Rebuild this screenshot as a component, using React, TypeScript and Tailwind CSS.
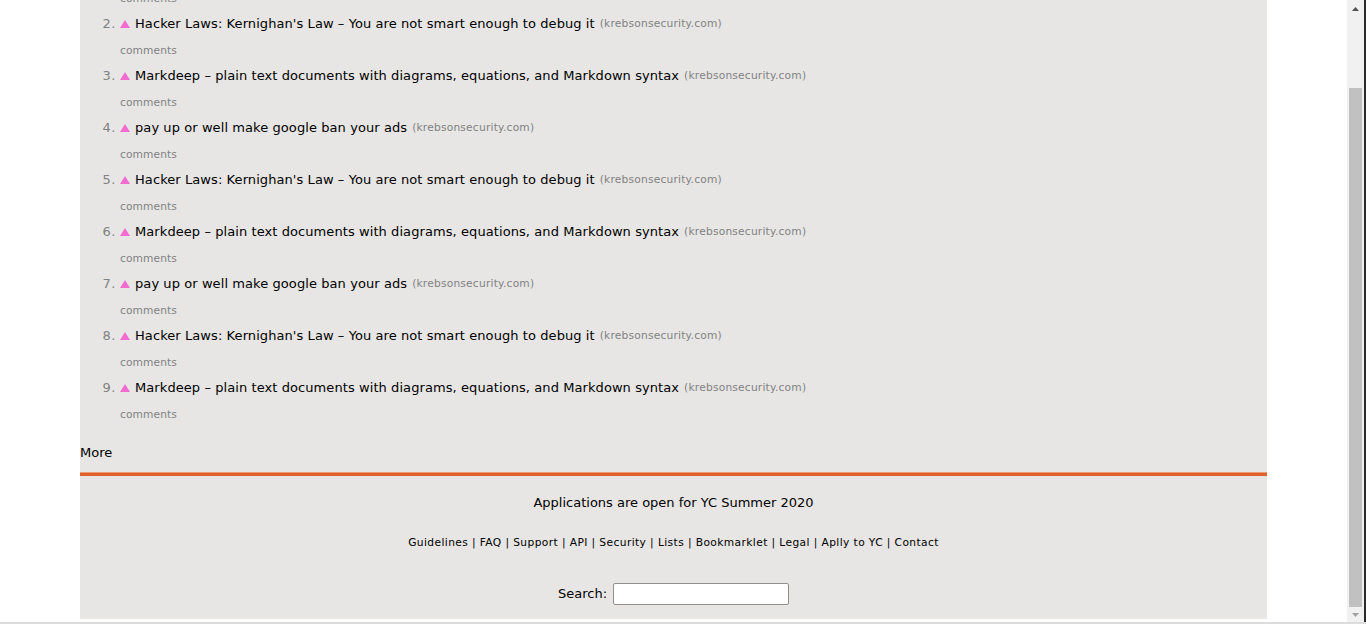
import React from 'react';

const titles = [
  'pay up or well make google ban your ads',
  "Hacker Laws: Kernighan's Law – You are not smart enough to debug it",
  'Markdeep – plain text documents with diagrams, equations, and Markdown syntax',
];

const stories = Array.from({ length: 9 }, (_, i) => ({
  rank: i + 1,
  title: titles[i % 3],
  site: 'krebsonsecurity.com',
}));

const footerLinks = ['Guidelines', 'FAQ', 'Support', 'API', 'Security', 'Lists', 'Bookmarklet', 'Legal', 'Aplly to YC', 'Contact'];

function UpArrow() {
  return (
    <svg width="10" height="8" viewBox="0 0 10 8" className="shrink-0">
      <polygon points="5,0 10,8 0,8" fill="#f26bd1" />
    </svg>
  );
}

function Story({ rank, title, site }: { rank: number; title: string; site: string }) {
  return (
    <div>
      <div className="h-[24px] flex items-center">
        <span className="w-[36px] text-right text-[13px] text-[#828282] tracking-[0.5px]">{rank}.</span>
        <span className="ml-[4px] mr-[5px] flex items-center">
          <UpArrow />
        </span>
        <a href="#" className="text-[13px] text-black tracking-[0.08px]">{title}</a>
        <span className="ml-[5px] text-[10.67px] text-[#828282] tracking-[0.2px]">({site})</span>
      </div>
      <div className="h-[28px] flex items-center pl-[40px] pt-[1px]">
        <a href="#" className="text-[10.67px] text-[#828282] tracking-[0.1px]">comments</a>
      </div>
    </div>
  );
}

// drawing of the browser's scrollbar, scrolled to the bottom
function Scrollbar() {
  return (
    <div className="w-[19px] h-full flex shrink-0">
      <div className="w-[17px] h-full bg-[#f1f1f1] flex flex-col items-center">
        <div className="h-[15px] w-full flex items-center justify-center pt-[2px]">
          <svg width="7" height="4" viewBox="0 0 7 4">
            <polygon points="3.5,0 7,4 0,4" fill="#505050" />
          </svg>
        </div>
        <div className="h-[73px] shrink-0" />
        <div className="flex-1 w-[13px] bg-[#c1c1c1]" />
        <div className="h-[15px] w-full flex items-center justify-center">
          <svg width="7" height="4" viewBox="0 0 7 4">
            <polygon points="0,0 7,0 3.5,4" fill="#a3a3a3" />
          </svg>
        </div>
      </div>
      <div className="w-[2px] h-full bg-[#2b2b2b]" />
    </div>
  );
}

export default function App() {
  return (
    <div className="h-screen flex flex-col overflow-hidden bg-white font-['Verdana','DejaVu_Sans',sans-serif]">
      <div className="flex-1 min-h-0 flex">
        <div className="flex-1 min-w-0 flex flex-col justify-end overflow-hidden">
          <div className="shrink-0 pt-2 pb-[3px]">
            <div className="w-[1187px] mx-auto bg-[#e7e6e4]">
              <header className="h-[24px] bg-[#e1622c] flex items-center px-[4px] text-[13px] text-black">
                <span className="w-[18px] h-[18px] border border-white flex items-center justify-center text-white font-bold text-[12px]">Y</span>
                <b className="ml-[6px]">Hacker News</b>
                <span className="ml-[8px]">new | past | comments | ask | show | jobs | submit</span>
                <span className="ml-auto pr-[4px]">login</span>
              </header>

              <main className="pt-[16px]">
                {stories.map((s) => (
                  <Story key={s.rank} {...s} />
                ))}
              </main>

              <div className="mt-[15px] h-[20px] flex items-center text-[13px] text-black">
                <a href="#">More</a>
              </div>

              <div className="mt-[9px] h-[4px] bg-[#e1612b] border-t border-[#eb9a74]" />

              <footer className="text-center text-black">
                <div className="mt-[19px] h-[16px] leading-[16px] text-[13px]">Applications are open for YC Summer 2020</div>
                <div className="mt-[25px] h-[14px] leading-[14px] text-[10.67px] tracking-[0.4px]">
                  {footerLinks.map((l, i) => (
                    <span key={l}>
                      {i > 0 && ' | '}
                      <a href="#">{l}</a>
                    </span>
                  ))}
                </div>
                <form
                  className="mt-[33px] pb-[14px] flex items-center justify-center gap-[6px] text-[13px]"
                  onSubmit={(e) => e.preventDefault()}
                >
                  <label htmlFor="q">Search:</label>
                  <input
                    id="q"
                    type="text"
                    className="w-[176px] h-[22px] bg-white border border-[#8f8f8f] rounded-[2px] px-1 text-[13px]"
                  />
                </form>
              </footer>
            </div>
          </div>
        </div>
        <Scrollbar />
      </div>
      <div className="h-[2px] bg-[#dcdcdc]" />
    </div>
  );
}
